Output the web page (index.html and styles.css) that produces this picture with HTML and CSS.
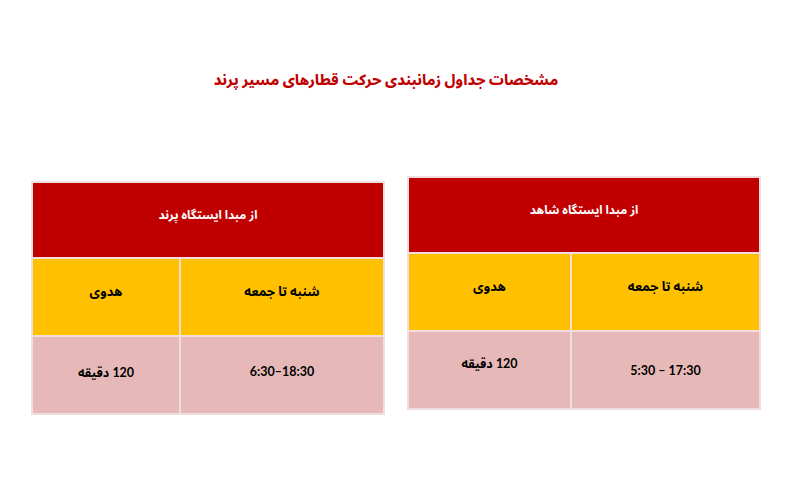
FILE: index.html
```html
<!DOCTYPE html>
<html lang="fa">
<head>
<meta charset="utf-8">
<link rel="stylesheet" href="styles.css">
</head>
<body>
<div class="page">
  <h1 class="title" dir="rtl">مشخصات جداول زمانبندی حرکت قطارهای مسیر پرند</h1>
  <div class="tables">
    <table class="sched sched-left" dir="rtl">
      <tr class="row-head"><td colspan="2">از مبدا ایستگاه پرند</td></tr>
      <tr class="row-sub"><td class="c-days-l">شنبه تا جمعه</td><td class="c-hw-l">هدوی</td></tr>
      <tr class="row-data"><td><span class="num" dir="ltr">6:30–18:30</span></td><td><span class="t-mid">120 دقیقه</span></td></tr>
    </table>
    <table class="sched sched-right" dir="rtl">
      <tr class="row-head"><td colspan="2">از مبدا ایستگاه شاهد</td></tr>
      <tr class="row-sub"><td class="c-days-r">شنبه تا جمعه</td><td class="c-hw-r">هدوی</td></tr>
      <tr class="row-data"><td><span class="num t-low" dir="ltr">5:30 – 17:30</span></td><td><span class="t-high">120 دقیقه</span></td></tr>
    </table>
  </div>
</div>
</body>
</html>
```

FILE: styles.css
```css
html, body {
  margin: 0;
  padding: 0;
  background: #ffffff;
}
.page {
  width: 800px;
  height: 500px;
  font-family: Lato, "Noto Sans Arabic", sans-serif;
}
.title {
  margin: 0;
  padding-top: 66px;
  padding-right: 28px;
  height: 30px;
  font-size: 14.6px;
  font-weight: 800;
  color: #c00000;
  text-align: center;
  line-height: 28px;
}
.tables {
  display: flex;
  align-items: flex-start;
  gap: 22px;
  padding-left: 31px;
}
.sched {
  width: 354px;
  border-collapse: collapse;
  border: 2px solid #efe3e3;
  font-weight: bold;
  font-size: 12px;
  text-align: center;
}
.sched td {
  border: 2px solid #f0dede;
  padding: 0;
}
.sched-left { margin-top: 85px; }
.sched-right { margin-top: 80px; }
.row-head td {
  background: #c00000;
  color: #ffffff;
  height: 64px;
  padding-bottom: 10px;
}
.row-sub td {
  background: #ffc000;
  color: #000000;
  height: 66px;
  font-size: 13px;
  padding-bottom: 10px;
}
.row-data td {
  background: #e6b9b8;
  color: #000000;
  height: 76px;
  font-size: 12.5px;
}
.num { font-size: 12.5px; position: relative; top: -4px; }
.t-mid { position: relative; top: -2px; }
.c-days-l { width: 202px; }
.c-hw-l { width: 146px; }
.c-days-r { width: 187px; }
.c-hw-r { width: 161px; }
.t-low { top: 0px; }
.t-high { position: relative; top: -6px; }
```
